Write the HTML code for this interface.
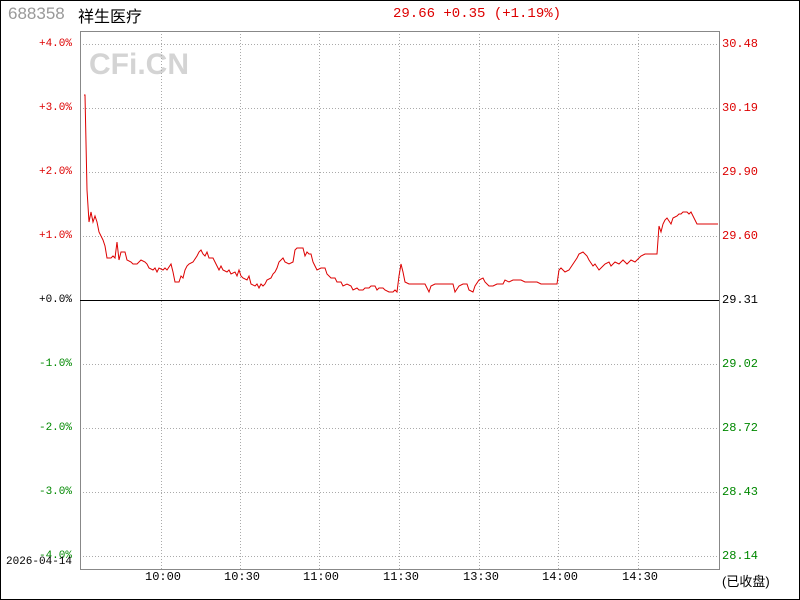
<!DOCTYPE html>
<html><head><meta charset="utf-8"><style>
body{margin:0;width:800px;height:600px;background:#fff;overflow:hidden;font-family:"Liberation Sans","Noto Sans CJK SC",sans-serif}
.b{position:absolute;left:0;top:0;width:798px;height:598px;border:1px solid #000}
.t{position:absolute;white-space:nowrap}
.l{font:11px "Liberation Mono",monospace;right:728px}
.r{font:12px "Liberation Mono",monospace;left:722px}
.x{font:12px "Liberation Mono",monospace;top:570px}
</style></head><body>
<div class="b"></div>
<div class="t" style="left:8px;top:4px;font-size:17px;color:#999">688358</div>
<div class="t" style="left:78px;top:3px;font-size:16px;color:#000">祥生医疗</div>
<div class="t" style="left:393px;top:6px;font:14px 'Liberation Mono',monospace;color:#d00">29.66 +0.35 (+1.19%)</div>
<div class="t" style="left:89px;top:48px;font:bold 30px 'Liberation Sans',sans-serif;color:#d4d4d4">CFi.CN</div>
<svg style="position:absolute;left:0;top:0" width="800" height="600">
<g stroke="#aaa" stroke-dasharray="1,2" fill="none">
<path d="M80 44.5H718M80 108.5H718M80 172.5H718M80 236.5H718M80 364.5H718M80 428.5H718M80 492.5H718M80 556.5H718"/>
<path d="M161.5 31V569M240.5 31V569M319.5 31V569M399.5 31V569M479.5 31V569M558.5 31V569M638.5 31V569"/>
</g>
<rect x="80.5" y="31.5" width="639" height="538" fill="none" stroke="#888"/>
<path d="M80 300.5H719" stroke="#000"/>
<polyline fill="none" stroke="#d00" stroke-width="1" points="84,95 85,95 87,190 89,222 91,212 93,222 95,216 97,222 99,232 101,236 103,240 105,246 107,258 111,258 113,256 115,258 117,242 119,260 121,252 125,252 127,260 131,262 133,264 137,264 141,260 145,262 147,264 149,268 153,270 155,268 157,272 159,268 163,270 165,268 167,270 171,264 173,272 175,282 179,282 181,276 183,278 185,270 187,266 189,264 193,262 197,256 199,252 201,250 203,254 205,256 207,252 209,258 213,258 215,262 217,266 219,270 221,266 223,270 227,272 229,270 231,274 235,272 237,276 239,270 241,276 243,278 247,280 249,276 251,284 255,286 257,284 259,288 261,284 263,286 265,284 267,280 271,278 273,274 275,272 277,268 279,262 283,258 285,262 289,264 293,262 295,250 297,248 301,248 303,248 305,256 307,252 309,254 311,254 313,262 315,266 317,270 321,268 325,268 327,274 331,278 335,278 337,282 341,282 343,286 347,284 351,286 353,290 357,288 359,290 363,290 365,288 369,288 371,286 375,286 377,290 379,288 383,288 385,290 389,292 393,292 395,290 397,292 399,276 401,264 403,272 405,282 409,284 413,284 425,284 427,288 429,292 431,286 435,284 441,284 449,284 453,284 455,292 459,286 463,284 467,284 469,290 473,292 475,286 479,280 483,278 485,282 489,286 493,286 497,284 503,284 505,280 509,282 513,280 517,280 521,280 525,282 529,282 537,282 541,284 549,284 557,284 559,270 561,268 565,272 569,270 573,264 577,258 579,254 583,252 587,256 589,260 593,266 595,264 599,270 603,266 605,264 609,262 611,266 615,262 619,264 623,260 627,264 631,260 635,262 637,260 641,256 645,254 657,254 659,226 661,232 663,224 665,220 667,218 671,224 673,218 677,216 679,214 681,214 683,212 687,212 689,214 691,212 693,216 695,220 697,224 701,224 718,224"/>
</svg>
<div class="t l" style="top:38px;color:#d00">+4.0%</div>
<div class="t l" style="top:102px;color:#d00">+3.0%</div>
<div class="t l" style="top:166px;color:#d00">+2.0%</div>
<div class="t l" style="top:230px;color:#d00">+1.0%</div>
<div class="t l" style="top:294px;color:#000">+0.0%</div>
<div class="t l" style="top:358px;color:#080">-1.0%</div>
<div class="t l" style="top:422px;color:#080">-2.0%</div>
<div class="t l" style="top:486px;color:#080">-3.0%</div>
<div class="t l" style="top:550px;color:#080">-4.0%</div>
<div class="t" style="left:6px;top:556px;font:11px 'Liberation Mono',monospace">2026-04-14</div>
<div class="t r" style="top:37px;color:#d00">30.48</div>
<div class="t r" style="top:101px;color:#d00">30.19</div>
<div class="t r" style="top:165px;color:#d00">29.90</div>
<div class="t r" style="top:229px;color:#d00">29.60</div>
<div class="t r" style="top:293px;color:#000">29.31</div>
<div class="t r" style="top:357px;color:#080">29.02</div>
<div class="t r" style="top:421px;color:#080">28.72</div>
<div class="t r" style="top:485px;color:#080">28.43</div>
<div class="t r" style="top:549px;color:#080">28.14</div>
<div class="t x" style="left:145px">10:00</div>
<div class="t x" style="left:224px">10:30</div>
<div class="t x" style="left:303px">11:00</div>
<div class="t x" style="left:383px">11:30</div>
<div class="t x" style="left:463px">13:30</div>
<div class="t x" style="left:542px">14:00</div>
<div class="t x" style="left:622px">14:30</div>
<div class="t" style="left:722px;top:571px;font-size:13px">(已收盘)</div>
</body></html>
